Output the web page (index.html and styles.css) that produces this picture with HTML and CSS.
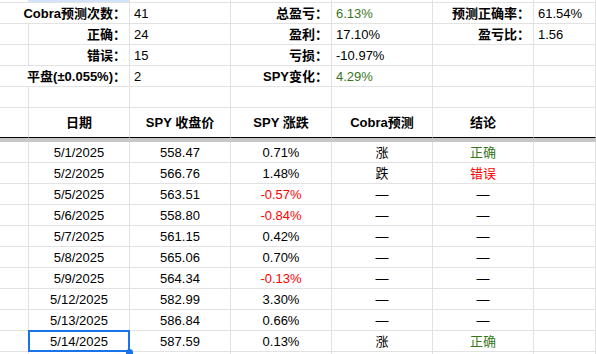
FILE: index.html
```html
<!DOCTYPE html>
<html lang="zh-CN">
<head>
<meta charset="utf-8">
<title>Cobra预测</title>
<link rel="stylesheet" href="styles.css">
</head>
<body>
<div class="sheet">
  <div class="row strip">
    <div class="c"></div><div class="c hl"></div><div class="c"></div><div class="c"></div><div class="c"></div><div class="c"></div><div class="c"></div>
  </div>

  <div class="row">
    <div class="c span2 r b">Cobra预测次数：</div>
    <div class="c">41</div>
    <div class="c r b">总盈亏：</div>
    <div class="c g">6.13%</div>
    <div class="c r b">预测正确率：</div>
    <div class="c">61.54%</div>
  </div>
  <div class="row">
    <div class="c"></div>
    <div class="c r b">正确：</div>
    <div class="c">24</div>
    <div class="c r b">盈利：</div>
    <div class="c">17.10%</div>
    <div class="c r b">盈亏比：</div>
    <div class="c">1.56</div>
  </div>
  <div class="row">
    <div class="c"></div>
    <div class="c r b">错误：</div>
    <div class="c">15</div>
    <div class="c r b">亏损：</div>
    <div class="c">-10.97%</div>
    <div class="c"></div>
    <div class="c"></div>
  </div>
  <div class="row">
    <div class="c span2 r b">平盘(±0.055%)：</div>
    <div class="c">2</div>
    <div class="c r b">SPY变化：</div>
    <div class="c g">4.29%</div>
    <div class="c"></div>
    <div class="c"></div>
  </div>
  <div class="row">
    <div class="c"></div><div class="c"></div><div class="c"></div><div class="c"></div><div class="c"></div><div class="c"></div><div class="c"></div>
  </div>

  <div class="row head">
    <div class="c"></div>
    <div class="c">日期</div>
    <div class="c">SPY 收盘价</div>
    <div class="c">SPY 涨跌</div>
    <div class="c">Cobra预测</div>
    <div class="c">结论</div>
    <div class="c"></div>
  </div>
  <div class="freeze"></div>

  <div class="data">
    <div class="row"><div class="c"></div><div class="c">5/1/2025</div><div class="c">558.47</div><div class="c">0.71%</div><div class="c">涨</div><div class="c g">正确</div><div class="c"></div></div>
    <div class="row"><div class="c"></div><div class="c">5/2/2025</div><div class="c">566.76</div><div class="c">1.48%</div><div class="c">跌</div><div class="c red">错误</div><div class="c"></div></div>
    <div class="row"><div class="c"></div><div class="c">5/5/2025</div><div class="c">563.51</div><div class="c red">-0.57%</div><div class="c">—</div><div class="c">—</div><div class="c"></div></div>
    <div class="row"><div class="c"></div><div class="c">5/6/2025</div><div class="c">558.80</div><div class="c red">-0.84%</div><div class="c">—</div><div class="c">—</div><div class="c"></div></div>
    <div class="row"><div class="c"></div><div class="c">5/7/2025</div><div class="c">561.15</div><div class="c">0.42%</div><div class="c">—</div><div class="c">—</div><div class="c"></div></div>
    <div class="row"><div class="c"></div><div class="c">5/8/2025</div><div class="c">565.06</div><div class="c">0.70%</div><div class="c">—</div><div class="c">—</div><div class="c"></div></div>
    <div class="row"><div class="c"></div><div class="c">5/9/2025</div><div class="c">564.34</div><div class="c red">-0.13%</div><div class="c">—</div><div class="c">—</div><div class="c"></div></div>
    <div class="row"><div class="c"></div><div class="c">5/12/2025</div><div class="c">582.99</div><div class="c">3.30%</div><div class="c">—</div><div class="c">—</div><div class="c"></div></div>
    <div class="row"><div class="c"></div><div class="c">5/13/2025</div><div class="c">586.84</div><div class="c">0.66%</div><div class="c">—</div><div class="c">—</div><div class="c"></div></div>
    <div class="row"><div class="c"></div><div class="c selected">5/14/2025</div><div class="c">587.59</div><div class="c">0.13%</div><div class="c">涨</div><div class="c g">正确</div><div class="c"></div></div>
    <div class="row tail"><div class="c"></div><div class="c"></div><div class="c"></div><div class="c"></div><div class="c"></div><div class="c"></div><div class="c"></div></div>
  </div>
</div>
</body>
</html>
```
FILE: styles.css
```css
* {
  box-sizing: border-box;
}

html, body {
  margin: 0;
  padding: 0;
  background: #ffffff;
}

body {
  width: 596px;
  height: 354px;
  overflow: hidden;
  font-family: "Liberation Sans", Arial, "Noto Sans CJK SC", sans-serif;
  font-size: 13px;
  color: #000000;
}

.sheet {
  display: flex;
  flex-direction: column;
}

.row {
  display: grid;
  grid-template-columns: 29px 101px 101px 101px 101px 101px 1fr;
}

.c {
  height: 21px;
  padding: 1px 3px 0 4px;
  line-height: 19px;
  white-space: nowrap;
  border-right: 1px solid #e2e2e2;
  border-bottom: 1px solid #e2e2e2;
}

.span2 {
  grid-column: span 2;
}

.r {
  text-align: right;
  padding-right: 3px;
}

.b {
  font-weight: bold;
}

.g {
  color: #38761d;
}

.red {
  color: #ff0000;
}

.strip .c {
  height: 3px;
  padding: 0;
}

.strip .hl {
  background: #d3e3fd;
}

.head .c {
  height: 30px;
  padding: 0 3px;
  line-height: 29px;
  font-weight: bold;
  text-align: center;
  border-bottom: 1px solid #000000;
}

.freeze {
  height: 4px;
  background: #c7c7c7;
}

.data .c {
  text-align: center;
  padding: 1px 3px 0;
}

.data .tail .c {
  height: 2px;
  padding: 0;
  border-bottom: 0;
}

.data .selected {
  position: relative;
}

.data .selected::after {
  content: "";
  position: absolute;
  left: -1px;
  top: -1px;
  right: -1px;
  bottom: -1px;
  border: 2px solid #1a73e8;
}

.data .selected::before {
  content: "";
  position: absolute;
  right: -4px;
  bottom: -3px;
  width: 7px;
  height: 5px;
  border-radius: 4px 4px 0 0;
  background: #1a73e8;
  z-index: 1;
}
```
